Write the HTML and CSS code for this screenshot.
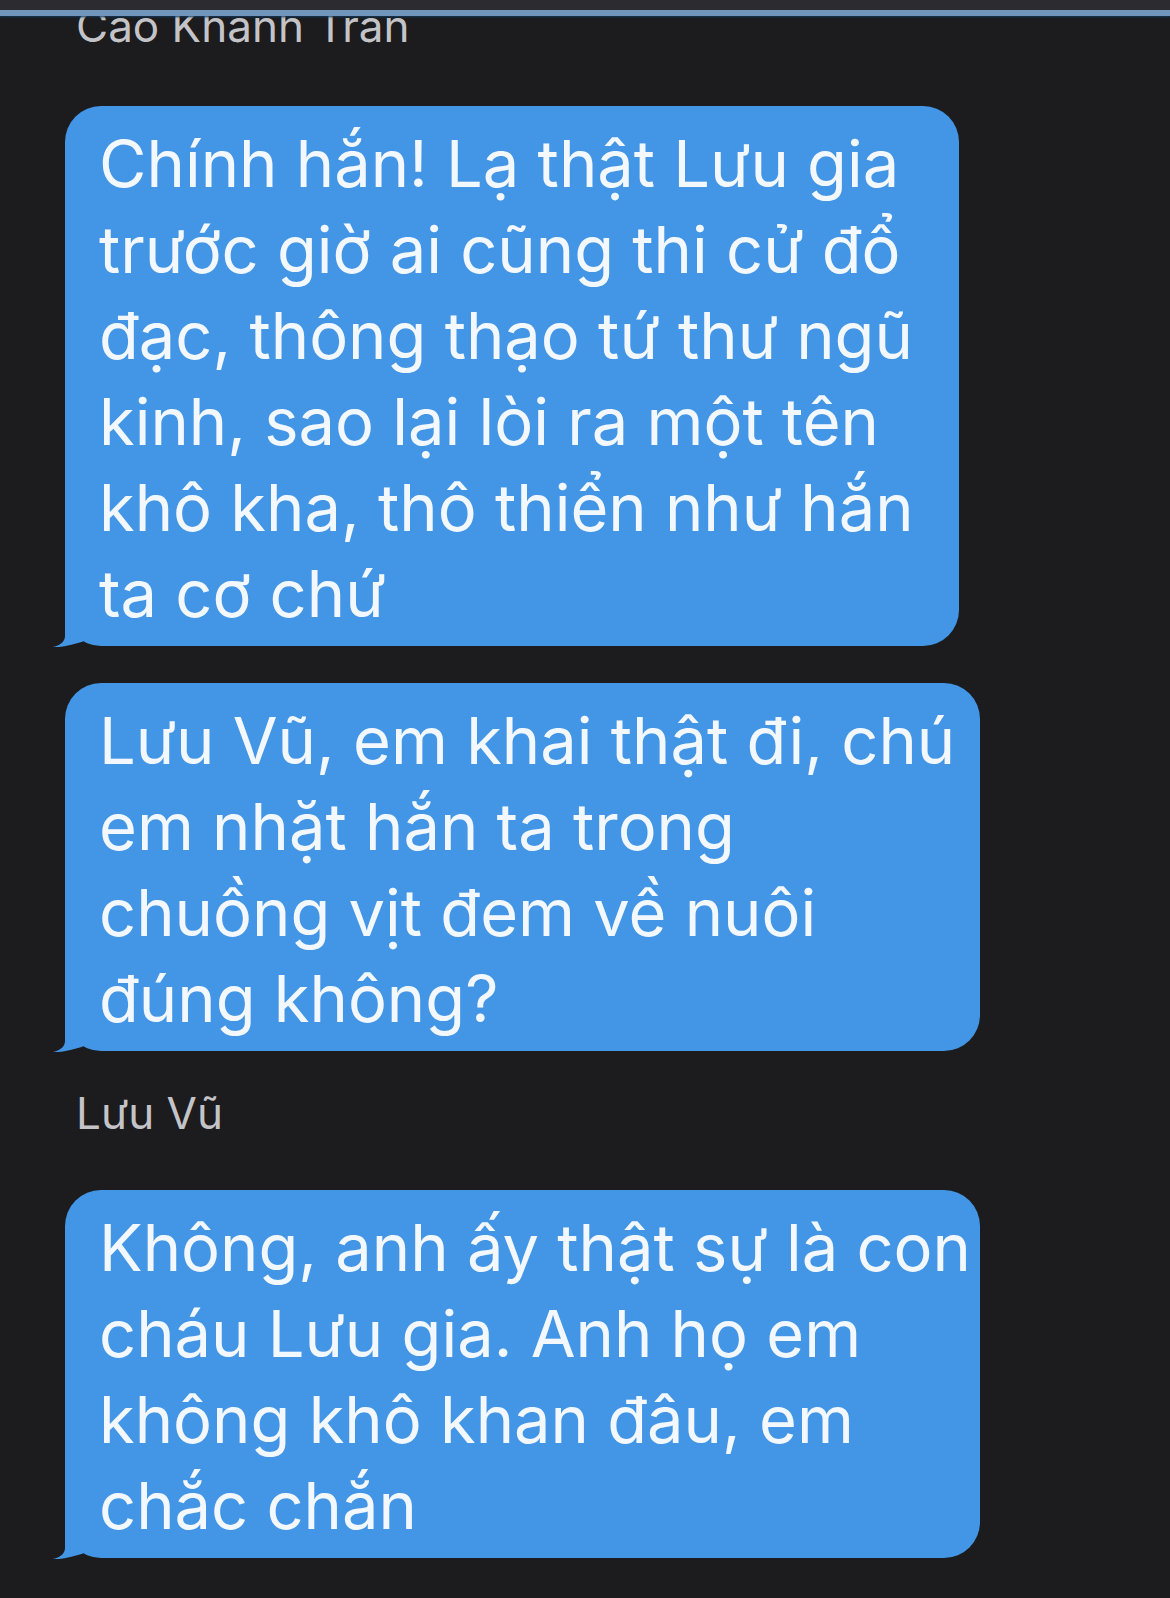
FILE: index.html
```html
<!DOCTYPE html>
<html lang="vi">
<head>
    <meta charset="UTF-8">
    <meta name="viewport" content="width=device-width, initial-scale=1.0">
    <title>Tin nhắn</title>
    <link rel="stylesheet" href="styles.css">
</head>
<body>
    <div class="topbar"></div>

    <div class="chat">
        <!-- first sender, name is cut off by the bar -->
        <div class="sender sender-first">Cao Khanh Trân</div>

        <div class="bubble bubble-one">
            Chính hắn! Lạ thật Lưu gia<br>
            trước giờ ai cũng thi cử đổ<br>
            đạc, thông thạo tứ thư ngũ<br>
            kinh, sao lại lòi ra một tên<br>
            khô kha, thô thiển như hắn<br>
            ta cơ chứ
            <svg class="tail" width="60" height="42" viewBox="0 0 60 42"><path d="M14,4 L14,30 C14,35 10,39 2,41 C10,41.5 20,39 32,35.5 L32,4 Z"/></svg>
        </div>

        <div class="bubble bubble-wide bubble-next">
            Lưu Vũ, em khai thật đi, chú<br>
            em nhặt hắn ta trong<br>
            chuồng vịt đem về nuôi<br>
            đúng không?
            <svg class="tail" width="60" height="42" viewBox="0 0 60 42"><path d="M14,4 L14,30 C14,35 10,39 2,41 C10,41.5 20,39 32,35.5 L32,4 Z"/></svg>
        </div>

        <div class="sender sender-second">Lưu Vũ</div>

        <div class="bubble bubble-wide bubble-last">
            Không, anh ấy thật sự là con<br>
            cháu Lưu gia. Anh họ em<br>
            không khô khan đâu, em<br>
            chắc chắn
            <svg class="tail" width="60" height="42" viewBox="0 0 60 42"><path d="M14,4 L14,30 C14,35 10,39 2,41 C10,41.5 20,39 32,35.5 L32,4 Z"/></svg>
        </div>

        <div class="status">Đã xem</div>
    </div>
</body>
</html>
```

FILE: styles.css
```css
body {
    margin: 0;
    background-color: #1c1c1e;
    font-family: Inter, "Noto Sans", sans-serif;
    overflow: hidden;
}
.topbar {
    position: relative;
    z-index: 2;
    height: 10px;
    background-color: #2b2b30;
    border-bottom: 6px solid #7196bb;
    box-shadow: 0 1px 2px #123a5c;
}
.chat {
    padding-left: 65px;
}
.sender {
    font-size: 44px;
    line-height: 48px;
    color: #c4c4c8;
    margin-left: 11px;
}
.sender-first {
    margin-top: -14px;
}
.sender-second {
    margin-top: 38px;
}
.bubble {
    position: relative;
    box-sizing: border-box;
    width: 894px;
    padding: 15px 0 9px 34px;
    background-color: #4396e6;
    color: #f3f8ff;
    font-size: 65px;
    line-height: 86px;
    border-radius: 36px;
    white-space: nowrap;
}
.bubble-one {
    margin-top: 56px;
}
.bubble-wide {
    width: 915px;
}
.bubble-next {
    margin-top: 37px;
}
.bubble-last {
    margin-top: 53px;
}
.tail {
    position: absolute;
    left: -14px;
    bottom: -2px;
    fill: #4396e6;
}
.status {
    margin-top: 36px;
    padding-right: 40px;
    text-align: right;
    font-size: 26px;
    color: #8e8e93;
}
```
